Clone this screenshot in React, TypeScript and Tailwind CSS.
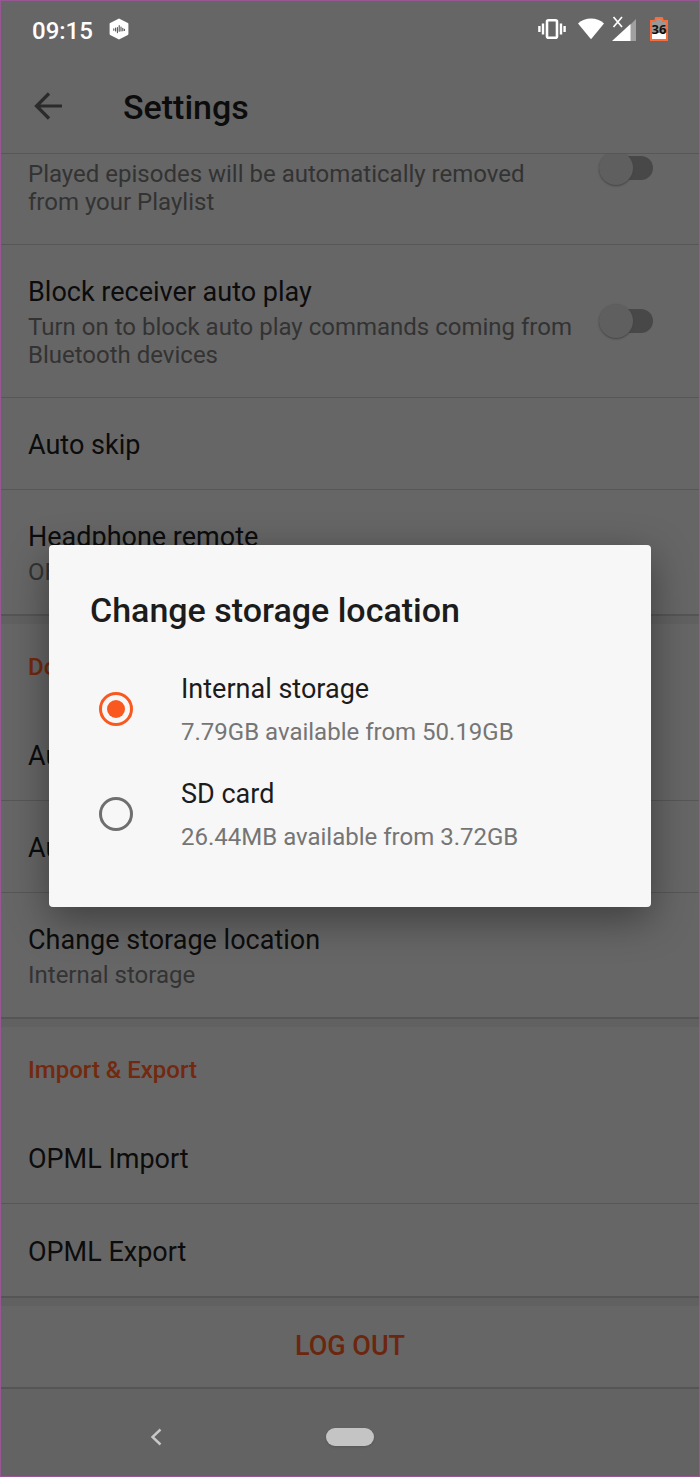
import React, { useState } from 'react';

interface RowProps {
  title: string;
  subtitle?: string;
  last?: boolean;
}

interface SwitchProps {
  label: string;
}

interface StorageOption {
  id: string;
  name: string;
  space: string;
}

const storageOptions: StorageOption[] = [
  { id: 'internal', name: 'Internal storage', space: '7.79GB available from 50.19GB' },
  { id: 'sd', name: 'SD card', space: '26.44MB available from 3.72GB' },
];

const StatusBar = () => (
  <div className="flex h-[59px] items-center justify-between px-[31px] text-white">
    <div className="flex items-center gap-4">
      <span className="text-2xl font-medium">09:15</span>
      <svg className="mb-1 h-[22px] w-5" viewBox="0 0 20 22" aria-hidden="true">
        <path
          d="M10 1.6 L18.4 6 V16 L10 20.4 L1.6 16 V6 Z"
          fill="#fff"
          stroke="#fff"
          strokeWidth="2"
          strokeLinejoin="round"
        />
        <path
          d="M4.8 10.8v1.4 M6.6 10v3 M8.4 9.6v5 M10.2 7.6v5.6 M12 9v4 M13.8 10.2v2.6 M15.4 11.4v1"
          stroke="#555"
          strokeWidth="1.1"
          strokeLinecap="round"
        />
      </svg>
    </div>
    <div className="flex items-center pb-1">
      <svg className="h-6 w-7" viewBox="0 0 28 24" aria-hidden="true">
        <rect x="9" y="3.2" width="10" height="17.6" rx="1.5" fill="none" stroke="#fff" strokeWidth="2.6" />
        <path d="M1.4 9v6 M5 6.5v11 M23 6.5v11 M26.6 9v6" stroke="#fff" strokeWidth="2.4" />
      </svg>
      <svg className="ml-3 h-6 w-[26px]" viewBox="0 0 26 24" aria-hidden="true">
        <path d="M0 6.5 C7 -0.2 19 -0.2 26 6.5 L13 22.2 Z" fill="#fff" />
      </svg>
      <svg className="ml-2 h-7 w-6" viewBox="0 0 24 28" aria-hidden="true">
        <path d="M24 4 V26 H2 Z" fill="#a0a0a0" />
        <path d="M18.5 9 V26 H0 Z" fill="#fff" />
        <path d="M1.5 2 L10 12 M10 2 L1.5 12" stroke="#fff" strokeWidth="1.7" />
      </svg>
      <div className="relative ml-3.5 h-6 w-[18px]">
        <svg className="h-6 w-[18px]" viewBox="0 0 18 24" aria-hidden="true">
          <path d="M1 4 H5 L6 1 H12 L13 4 H17 V23 H1 Z" fill="#999" />
          <path d="M1 16 H17 V23 H1 Z" fill="#fff" />
          <path d="M1 4 H5 L6 1 H12 L13 4 H17 V23 H1 Z" fill="none" stroke="#f96d3c" strokeWidth="2" />
        </svg>
        <span className="absolute inset-0 flex items-center justify-center pt-0.5 font-['Open_Sans'] text-[13px] font-bold text-[#111]">
          36
        </span>
      </div>
    </div>
  </div>
);

const Header = () => (
  <header className="flex h-[94px] items-center border-b border-[#575757] px-[33px]">
    <button type="button" aria-label="Back" className="pb-0.5">
      <svg className="h-7 w-7" viewBox="0 0 28 28" aria-hidden="true">
        <path d="M28 14 H3 M15 1.5 L2.5 14 L15 26.5" fill="none" stroke="#2b2b2b" strokeWidth="3.2" />
      </svg>
    </button>
    <h1 className="ml-[61px] pt-0.5 text-[34px] font-medium text-[#0c0c0c]">Settings</h1>
  </header>
);

const Switch = ({ label }: SwitchProps) => (
  <input
    type="checkbox"
    role="switch"
    aria-label={label}
    className="relative mr-[19px] h-6 w-[54px] shrink-0 appearance-none rounded-full bg-[#484848] before:absolute before:-top-[5px] before:left-0 before:size-[34px] before:rounded-full before:bg-[#5f5f5f] before:shadow-[0_1px_2px_#444]"
  />
);

const Row = ({ title, subtitle, last }: RowProps) => (
  <button
    type="button"
    className={`flex w-full flex-col justify-center px-[27px] text-left ${
      subtitle ? 'pt-[29px] pb-7' : 'pt-[3px]'
    } ${last ? 'min-h-[94px] border-b-2 border-[#555]' : 'min-h-[92px] border-b border-[#575757]'}`}
  >
    <span className="text-[27px] leading-9 text-[#0c0c0c]">{title}</span>
    {subtitle && <span className="mt-[3px] text-2xl leading-7 text-[#333]">{subtitle}</span>}
  </button>
);

const SectionHeading = ({ title }: { title: string }) => (
  <div className="border-t-8 border-[#616161]">
    <h2 className="flex h-[85px] items-center px-[27px] text-2xl font-medium text-[#72290f]">{title}</h2>
  </div>
);

const StorageDialog = () => {
  const [selected, setSelected] = useState('internal');

  return (
    <div className="absolute inset-x-0 top-15 bottom-[85px] flex items-center px-12">
      <div
        role="dialog"
        aria-labelledby="storage-title"
        className="w-full rounded-sm bg-[#f7f7f7] pt-[45px] pb-14 shadow-[0_12px_40px_rgba(0,0,0,0.4)]"
      >
        <h2 id="storage-title" className="px-[41px] text-[34px] leading-10 font-medium text-[#1c1c1c]">
          Change storage location
        </h2>
        <div className="mt-[41px] flex flex-col gap-[30px] px-[50px]">
          {storageOptions.map((option) => (
            <label key={option.id} className="flex items-center gap-12">
              <input
                type="radio"
                name="storage"
                value={option.id}
                checked={selected === option.id}
                onChange={() => setSelected(option.id)}
                className="flex size-[34px] shrink-0 appearance-none items-center justify-center rounded-full border-[3px] border-[#6f6f6f] before:size-[18px] before:rounded-full checked:border-[#f9591f] checked:before:bg-[#f9591f]"
              />
              <span className="flex flex-col gap-[11px]">
                <span className="text-[27px] leading-9 text-[#1c1c1c]">{option.name}</span>
                <span className="text-2xl leading-7 text-[#757575]">{option.space}</span>
              </span>
            </label>
          ))}
        </div>
      </div>
    </div>
  );
};

const NavBar = () => (
  <nav className="flex grow items-center bg-[#636363] pt-9 pb-7">
    <div className="flex flex-1 justify-center">
      <button type="button" aria-label="Go back" className="mr-4">
        <svg className="h-[18px] w-3" viewBox="0 0 12 18" aria-hidden="true">
          <path d="M10.5 1.5 L2.5 9 L10.5 16.5" fill="none" stroke="#c8c8c8" strokeWidth="2.4" />
        </svg>
      </button>
    </div>
    <button type="button" aria-label="Home" className="h-[18px] w-12 rounded-full bg-[#c4c4c4] shadow-sm" />
    <div className="flex-1" />
  </nav>
);

const App = () => {
  return (
    <div className="relative flex min-h-screen flex-col border border-[#965793] bg-[#666] font-[Roboto,sans-serif]">
      <StatusBar />
      <Header />
      <main>
        {/* first row is partly scrolled under the header */}
        <div className="flex h-[91px] items-end overflow-hidden border-b border-[#575757] px-[27px]">
          <div className="flex h-[152px] w-full shrink-0 items-center justify-between">
            <p className="self-end pb-7 text-2xl leading-7 text-[#333]">
              Played episodes will be automatically removed
              <br />
              from your Playlist
            </p>
            <Switch label="Remove played episodes" />
          </div>
        </div>
        <div className="flex items-center justify-between border-b border-[#575757] px-[27px]">
          <div className="pt-[29px] pb-7">
            <h3 className="text-[27px] leading-9 text-[#0c0c0c]">Block receiver auto play</h3>
            <p className="mt-[3px] text-2xl leading-7 text-[#333]">
              Turn on to block auto play commands coming from
              <br />
              Bluetooth devices
            </p>
          </div>
          <Switch label="Block receiver auto play" />
        </div>
        <Row title="Auto skip" />
        <Row title="Headphone remote" subtitle="OFF" last />
        <SectionHeading title="Downloads" />
        <Row title="Auto download" />
        <Row title="Auto delete" />
        <Row title="Change storage location" subtitle="Internal storage" last />
        <SectionHeading title="Import & Export" />
        <Row title="OPML Import" />
        <Row title="OPML Export" last />
        <button
          type="button"
          className="flex h-[91px] w-full items-center justify-center border-t-8 border-b-2 border-t-[#616161] border-b-[#555] text-[27px] font-medium text-[#6b260f]"
        >
          LOG OUT
        </button>
      </main>
      <NavBar />
      <StorageDialog />
    </div>
  );
};

export default App;
